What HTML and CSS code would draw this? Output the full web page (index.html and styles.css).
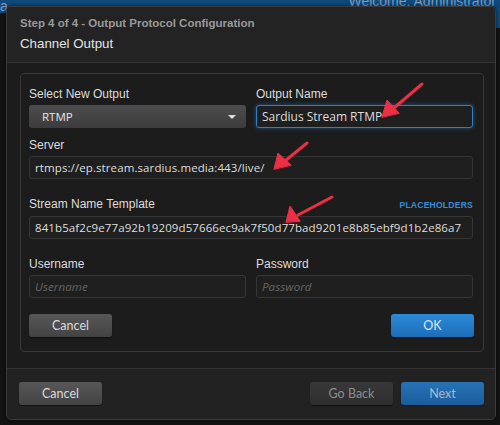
FILE: index.html
```html
<!DOCTYPE html>
<html>
<head>
<meta charset="utf-8">
<link rel="stylesheet" href="styles.css">
</head>
<body>
<div class="app-bg">
  <div class="topband"><span class="left-text">a</span><span class="welcome">Welcome, Administrator</span></div>
</div>

<div class="modal">
  <div class="modal-header">
    <div class="step">Step 4 of 4 - Output Protocol Configuration</div>
    <div class="title">Channel Output</div>
  </div>
  <div class="modal-body">
    <div class="panel">
      <div class="grid">
        <div class="field">
          <label class="lbl">Select New Output</label>
          <div class="select"><span>RTMP</span><span class="caret"></span></div>
        </div>
        <div class="field">
          <label class="lbl">Output Name</label>
          <div class="input focus">Sardius Stream RTMP</div>
        </div>
        <div class="field span2 gap-s">
          <label class="lbl">Server</label>
          <div class="input">rtmps://ep.stream.sardius.media:443/live/</div>
        </div>
        <div class="field span2 gap-l">
          <div class="lblrow"><label class="lbl">Stream Name Template</label><span class="ph">PLACEHOLDERS</span></div>
          <div class="input">841b5af2c9e77a92b19209d57666ec9ak7f50d77bad9201e8b85ebf9d1b2e86a7</div>
        </div>
        <div class="field gap-l">
          <label class="lbl">Username</label>
          <div class="input placeholder">Username</div>
        </div>
        <div class="field gap-l">
          <label class="lbl">Password</label>
          <div class="input placeholder">Password</div>
        </div>
      </div>
      <div class="panel-actions">
        <button class="btn gray">Cancel</button>
        <button class="btn blue">OK</button>
      </div>
    </div>
  </div>
  <div class="modal-footer">
    <button class="btn gray">Cancel</button>
    <div class="right">
      <button class="btn dim">Go Back</button>
      <button class="btn next">Next</button>
    </div>
  </div>
</div>

<svg class="arrows" width="500" height="425" viewBox="0 0 500 425">
  <g stroke="#ec2f44" stroke-width="3" stroke-linecap="round" fill="#ec2f44">
    <line x1="422" y1="84" x2="394" y2="108"/>
    <polygon points="382,117 387,100 399,113" stroke-width="1" stroke-linejoin="round"/>
    <line x1="307" y1="143" x2="285" y2="161"/>
    <polygon points="274,169 278,153 291,165" stroke-width="1" stroke-linejoin="round"/>
    <line x1="332" y1="197" x2="298" y2="215"/>
    <polygon points="286,222 290,206 300,221" stroke-width="1" stroke-linejoin="round"/>
  </g>
</svg>
</body>
</html>
```

FILE: styles.css
```css
* { box-sizing: border-box; }
html, body { margin: 0; padding: 0; }
body {
  width: 500px;
  height: 425px;
  overflow: hidden;
  background: #131313;
  font-family: "Liberation Sans", Arial, sans-serif;
  position: relative;
}
.app-bg { height: 425px; position: relative; }
.topband {
  height: 13px;
  background: #0f4a7c;
  position: relative;
  overflow: hidden;
}
.app-bg::after {
  content: "";
  position: absolute;
  right: 0;
  top: 13px;
  width: 6px;
  height: 15px;
  background: #0f4a7c;
}
.welcome {
  position: absolute;
  right: 4px;
  top: -7px;
  font-size: 14px;
  color: #7f9fc0;
}
.left-text {
  position: absolute;
  left: 0;
  top: -2px;
  font-size: 14px;
  color: #7f9fc0;
}

.modal {
  position: absolute;
  left: 6px;
  top: 6px;
  width: 490px;
  height: 414px;
  background: #1c1c1c;
  border: 1px solid #3b3b3b;
  border-radius: 5px;
  display: flex;
  flex-direction: column;
  overflow: hidden;
  box-shadow: 0 0 4px rgba(0,0,0,0.6);
}
.modal-header {
  height: 56px;
  background: #232323;
  border-bottom: 1px solid #333;
  padding: 9px 13px 0;
}
.step {
  font-weight: bold;
  font-size: 11.5px;
  color: #9a9a9a;
  line-height: 15px;
}
.title {
  font-size: 13.3px;
  color: #e4e4e4;
  line-height: 17px;
  margin-top: 4px;
}
.modal-body {
  flex: 1;
  padding: 10px 11px 0 13px;
  background: #1c1c1c;
}
.panel {
  height: 279px;
  border: 1px solid #383838;
  border-radius: 4px;
  padding: 12px 9px 0 8px;
}
.grid {
  display: grid;
  grid-template-columns: 217px 217px;
  column-gap: 10px;
}
.span2 { grid-column: span 2; }
.field { display: flex; flex-direction: column; }
.gap-s { margin-top: 9px; }
.gap-l { margin-top: 17px; }
.lbl {
  font-size: 12px;
  color: #dcdcdc;
  line-height: 16px;
  margin-bottom: 3px;
}
.lblrow {
  display: flex;
  justify-content: space-between;
  align-items: baseline;
  margin-bottom: 1px;
}
.lblrow .lbl { margin-bottom: 3px; }
.ph {
  font-size: 8.6px;
  font-weight: bold;
  color: #3a8fd8;
  letter-spacing: 0.2px;
}
.select {
  height: 23px;
  border-radius: 3px;
  background: linear-gradient(#4d4d4d, #3c3c3c);
  display: flex;
  align-items: center;
  justify-content: space-between;
  padding: 0 10px 0 13px;
  font-family: "Open Sans", sans-serif;
  font-size: 11.5px;
  color: #e6e6e6;
}
.caret {
  width: 0;
  height: 0;
  border-left: 4px solid transparent;
  border-right: 4px solid transparent;
  border-top: 4px solid #e0e0e0;
}
.input {
  height: 23px;
  background: #1f1f1f;
  border: 1px solid #363636;
  border-radius: 3px;
  padding: 0 0 0 5px;
  display: flex;
  align-items: center;
  font-family: "Open Sans", sans-serif;
  font-size: 11.5px;
  letter-spacing: 0.1px;
  color: #dedede;
  white-space: nowrap;
  overflow: hidden;
}
.input.focus {
  border-color: #2f7fc4;
  box-shadow: 0 0 4px rgba(40,130,220,0.55);
  font-size: 12px;
  letter-spacing: 0;
}
.input.placeholder {
  color: #666;
  font-style: italic;
}
.panel-actions {
  display: flex;
  justify-content: space-between;
  margin-top: 16px;
}
.btn {
  width: 83px;
  height: 23px;
  border: none;
  border-radius: 3px;
  font-family: Lato, sans-serif;
  font-size: 12.5px;
  padding: 0;
  cursor: pointer;
}
.btn.gray {
  background: linear-gradient(#575757, #434343);
  color: #dadada;
  box-shadow: 0 1px 1px rgba(0,0,0,0.5);
}
.btn.blue {
  background: linear-gradient(#2d8ad8, #1c6db8);
  color: #d8e6f2;
  box-shadow: 0 1px 1px rgba(0,0,0,0.5);
}
.btn.dim {
  background: linear-gradient(#383838, #2e2e2e);
  color: #8e8e8e;
  box-shadow: 0 1px 1px rgba(0,0,0,0.5);
}
.btn.next {
  background: linear-gradient(#2772b6, #1b5d9c);
  color: #a6bccd;
  box-shadow: 0 1px 1px rgba(0,0,0,0.5);
}
.modal-footer {
  height: 51px;
  background: #222;
  border-top: 1px solid #333;
  display: flex;
  justify-content: space-between;
  align-items: flex-start;
  padding: 13px 11px 0 12px;
}
.modal-footer .right { display: flex; gap: 8px; }

.arrows {
  position: absolute;
  left: 0;
  top: 0;
  pointer-events: none;
}
```
